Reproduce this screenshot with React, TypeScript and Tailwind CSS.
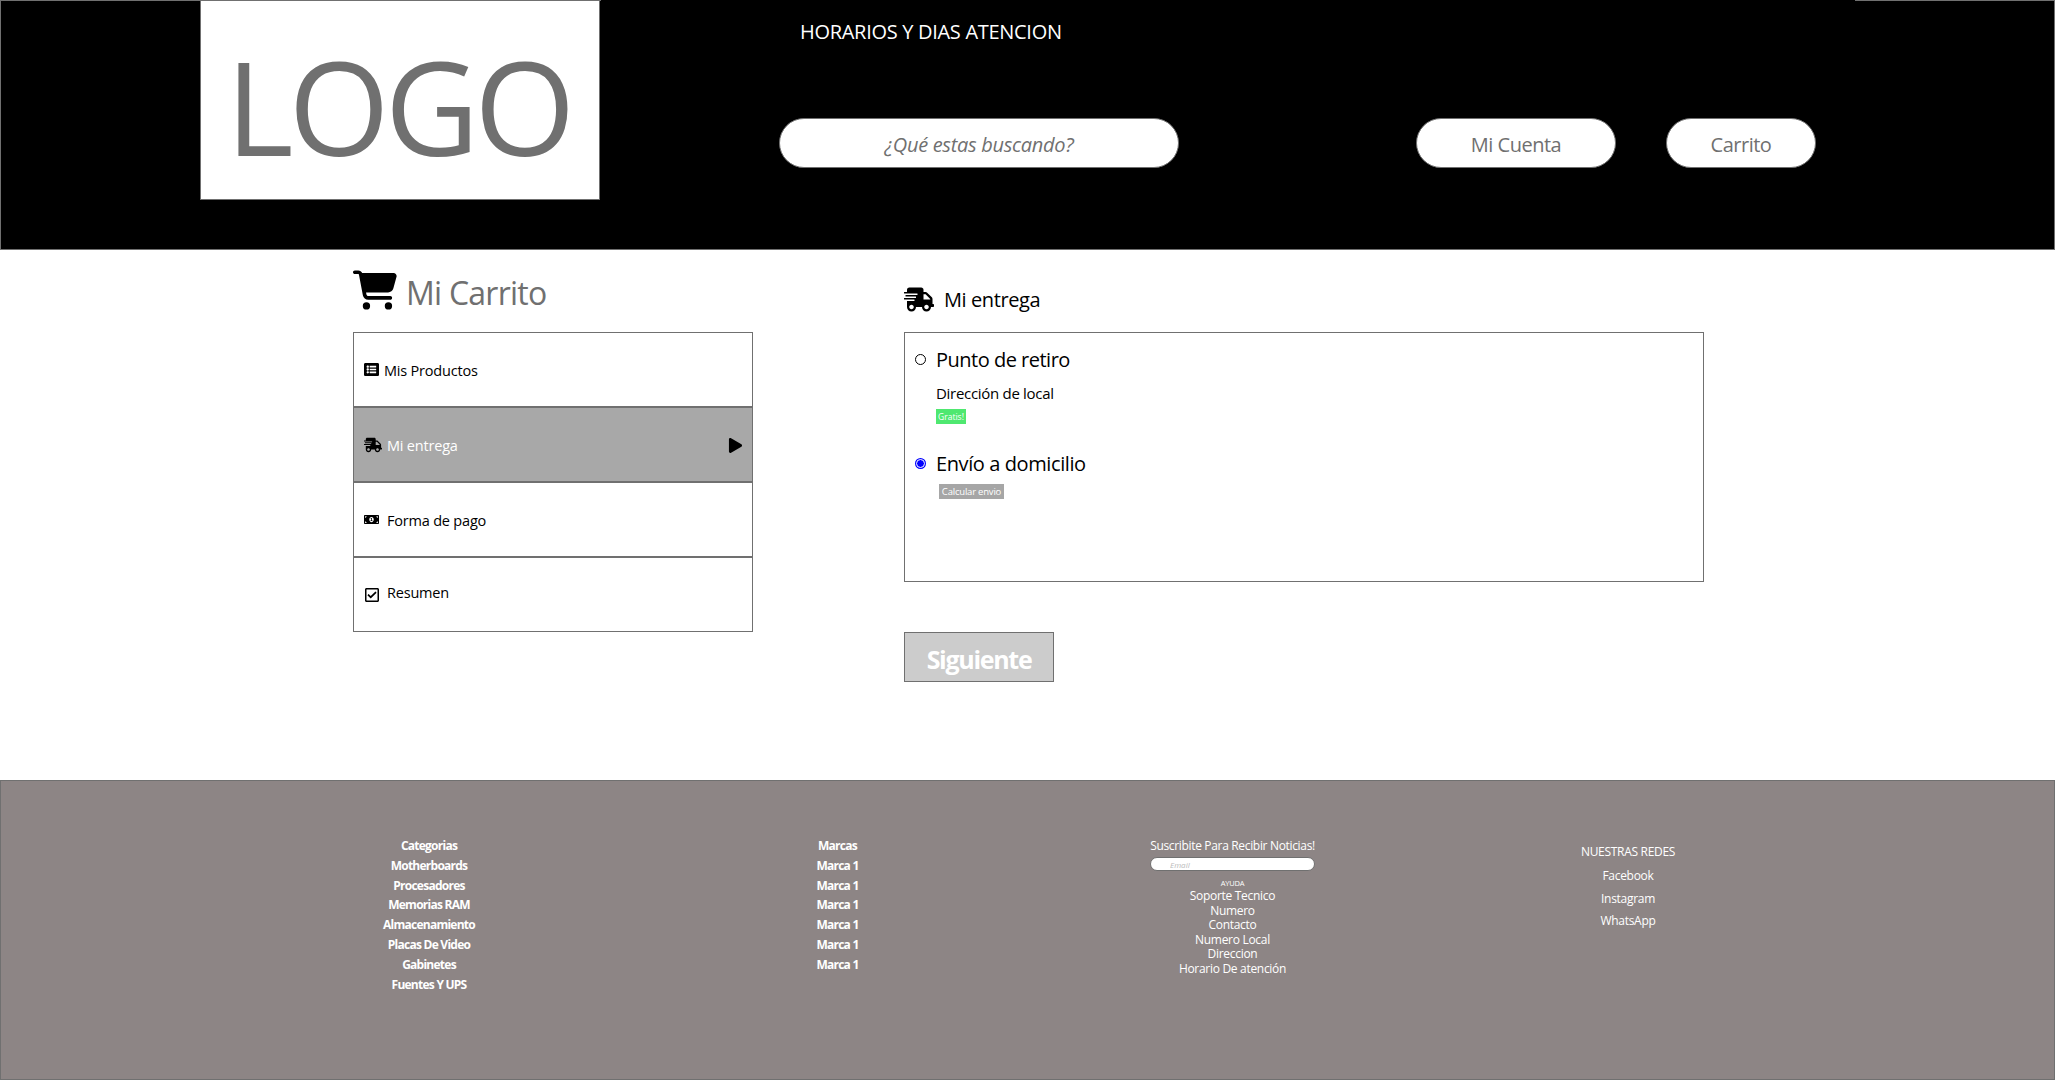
import {
  FaShippingFast,
  FaListAlt,
  FaMoneyBillAlt,
  FaRegCheckSquare,
  FaPlay,
} from "react-icons/fa";
import { FaCartShopping } from "react-icons/fa6";

const categorias = [
  "Categorias",
  "Motherboards",
  "Procesadores",
  "Memorias RAM",
  "Almacenamiento",
  "Placas De Video",
  "Gabinetes",
  "Fuentes Y UPS",
];

const marcas = ["Marcas", "Marca 1", "Marca 1", "Marca 1", "Marca 1", "Marca 1", "Marca 1"];

const ayuda = ["Soporte Tecnico", "Numero", "Contacto", "Numero Local", "Direccion", "Horario De atención"];

const redes = ["Facebook", "Instagram", "WhatsApp"];

function Header() {
  return (
    <header className="h-[250px] bg-black border-x border-b border-[#707070] flex flex-col">
      <div className="flex h-px shrink-0">
        <div className="w-[600px] bg-[#707070]" />
        <div className="flex-1" />
        <div className="w-[199px] bg-[#707070]" />
      </div>
      <div className="flex flex-1 pl-[199px]">
        <div className="w-[400px] h-[200px] -mt-px bg-white border border-[#707070] flex items-center justify-center">
          <span className="text-[130px] leading-none text-[#707070] tracking-[-5px] pt-[12px] pr-[4px]">LOGO</span>
        </div>
        <div className="w-[400px] ml-[179px] flex flex-col">
          <div className="pl-[21px] pt-[18px] text-[20px] leading-[25px] text-white tracking-[-0.3px]">
            HORARIOS Y DIAS ATENCION
          </div>
          <input
            placeholder="¿Qué estas buscando?"
            className="mt-[74px] h-[50px] w-full rounded-full bg-white border border-[#707070] text-center text-[20px] italic tracking-[-0.3px] text-[#707070] placeholder:text-[#707070] pt-[3px] outline-none"
          />
        </div>
        <div className="ml-[237px] mt-[117px] flex gap-[50px]">
          <div className="w-[200px] h-[50px] rounded-full bg-white border border-[#707070] flex items-center justify-center pt-[4px] text-[20px] tracking-[-0.5px] text-[#707070]">
            Mi Cuenta
          </div>
          <div className="w-[150px] h-[50px] rounded-full bg-white border border-[#707070] flex items-center justify-center pt-[4px] text-[20px] tracking-[-0.5px] text-[#707070]">
            Carrito
          </div>
        </div>
      </div>
    </header>
  );
}

function Sidebar() {
  return (
    <div className="w-[400px] shrink-0">
      <div className="h-[82px] flex items-start pt-[17px]">
        <FaCartShopping className="w-[44px] h-[46px] text-black" />
        <span className="ml-[9px] pt-[4px] text-[32px] leading-[44px] tracking-[-0.75px] text-[#707070]">Mi Carrito</span>
      </div>
      <div className="border border-[#707070] h-[300px] flex flex-col text-[14.5px] tracking-[-0.2px] text-black">
        <div className="h-[75px] border-b-2 border-[#707070] flex items-center pl-[10px] pt-[2px]">
          <FaListAlt className="w-[15px] h-[15px] -mt-[2px]" />
          <span className="ml-[5px]">Mis Productos</span>
        </div>
        <div className="h-[75px] border-b-2 border-[#707070] bg-[#a8a8a8] flex items-center pl-[10px] pr-[9px] pt-[2px]">
          <FaShippingFast className="w-[18px] h-[16px] -mt-[2px]" />
          <span className="ml-[5px] text-white">Mi entrega</span>
          <FaPlay className="ml-auto w-[15px] h-[15px] -mt-[1px]" />
        </div>
        <div className="h-[75px] border-b-2 border-[#707070] flex items-center pl-[10px] pt-[2px]">
          <FaMoneyBillAlt className="w-[15px] h-[15px] -mt-[2px]" />
          <span className="ml-[8px]">Forma de pago</span>
        </div>
        <div className="flex-1 flex items-center pl-[10px]">
          <FaRegCheckSquare className="w-[16px] h-[16px] mt-[1px]" />
          <span className="ml-[7px] -mt-[3px]">Resumen</span>
        </div>
      </div>
    </div>
  );
}

function Entrega() {
  return (
    <div className="w-[800px] ml-[151px] shrink-0">
      <div className="h-[82px] flex items-start pt-[37px]">
        <FaShippingFast className="w-[30px] h-[25px] text-black" />
        <span className="ml-[10px] -mt-[1px] text-[20px] leading-[27px] tracking-[-0.4px] text-black">Mi entrega</span>
      </div>
      <div className="h-[250px] border border-[#707070] pl-[10px] pt-[13px] text-black">
        <div className="flex items-center h-[27px]">
          <span className="w-[11px] h-[11px] rounded-full border border-black bg-white" />
          <span className="ml-[10px] text-[20px] tracking-[-0.5px]">Punto de retiro</span>
        </div>
        <div className="pl-[21px] mt-[10px] text-[15px] leading-[20px] tracking-[-0.3px]">Dirección de local</div>
        <div className="ml-[21px] mt-[6px] w-[30px] h-[15px] bg-[#4fe870] text-white text-[8.5px] leading-[15px] text-center">
          Gratis!
        </div>
        <div className="flex items-center h-[27px] mt-[26px]">
          <span className="w-[11px] h-[11px] rounded-full bg-[#0000ff] border-[2px] border-[#0000ff] outline outline-1 -outline-offset-2 outline-white" />
          <span className="ml-[10px] text-[20px] tracking-[-0.4px]">Envío a domicilio</span>
        </div>
        <div className="ml-[24px] mt-[7px] w-[65px] h-[15px] bg-[#a6a6a6] text-white text-[9.5px] tracking-[-0.2px] leading-[15px] text-center">
          Calcular envio
        </div>
      </div>
      <button className="block mt-[50px] w-[150px] h-[50px] bg-[#cccccc] border border-[#707070] text-white text-[25px] font-bold tracking-[-1.3px] pt-[5px]">
        Siguiente
      </button>
    </div>
  );
}

function Footer() {
  return (
    <footer className="h-[300px] bg-[#8d8585] border border-[#707070] flex pl-[224px] pt-[55px] text-white text-center">
      <div className="w-[408px] text-[12px] leading-[19.8px] font-bold tracking-[-0.75px]">
        {categorias.map((c) => (
          <div key={c}>{c}</div>
        ))}
      </div>
      <div className="w-[409px] text-[12px] leading-[19.8px] font-bold tracking-[-0.75px]">
        {marcas.map((m, i) => (
          <div key={i}>{m}</div>
        ))}
      </div>
      <div className="w-[381px] flex flex-col items-center">
        <div className="text-[12px] leading-[20px] tracking-[-0.33px]">Suscribite Para Recibir Noticias!</div>
        <input
          placeholder="Email"
          className="w-[165px] h-[14px] mt-[1px] rounded-full bg-white border border-[#707070] pl-[19px] text-[8px] italic text-[#bbbbbb] placeholder:text-[#bbbbbb] outline-none"
        />
        <div className="mt-[7px] text-[7.5px] leading-[10px] tracking-[-0.2px]">AYUDA</div>
        <div className="mt-[1px] text-[12px] leading-[14.6px] tracking-[-0.3px]">
          {ayuda.map((a) => (
            <div key={a}>{a}</div>
          ))}
        </div>
      </div>
      <div className="w-[409px] pt-[7px] text-[12px] tracking-[-0.3px]">
        <div className="leading-[18px] pl-[1px]">NUESTRAS REDES</div>
        <div className="leading-[22.5px] mt-[4px] pl-[1px]">
          {redes.map((r) => (
            <div key={r}>{r}</div>
          ))}
        </div>
      </div>
    </footer>
  );
}

export default function App() {
  return (
    <div className="w-[2055px] h-[1080px] overflow-hidden bg-white font-['Open_Sans',sans-serif]">
      <Header />
      <main className="h-[530px] flex pl-[353px]">
        <Sidebar />
        <Entrega />
      </main>
      <Footer />
    </div>
  );
}
